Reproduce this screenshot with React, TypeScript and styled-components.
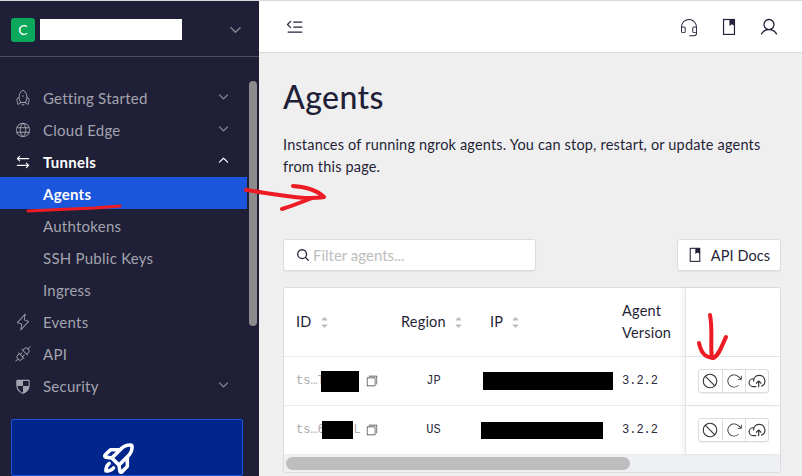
import styled, {createGlobalStyle} from 'styled-components';
import {
  PiCaretDownBold,
  PiCaretUpBold,
  PiCaretUpDownFill,
  PiRocketLight,
  PiGlobeLight,
  PiArrowsLeftRight,
  PiLightningLight,
  PiPlugsLight,
  PiShieldCheckeredFill,
  PiRocketLaunchBold,
  PiTextOutdent,
  PiHeadsetLight,
  PiUser,
  PiMagnifyingGlassBold,
  PiCopySimpleLight,
  PiProhibit,
  PiArrowClockwiseLight,
  PiCloudArrowUp,
} from 'react-icons/pi';

const GlobalStyle = createGlobalStyle`
  html, body {
    margin: 0;
    padding: 0;
    height: 476px;
    overflow: hidden;
  }
  body {
    font-family: Lato, "Liberation Sans", sans-serif;
    background: #efefef;
  }
  * {
    box-sizing: border-box;
  }
`;

const Wrapper = styled.div`
  position: relative;
  display: flex;
  width: 802px;
  height: 476px;
  overflow: hidden;
`;

const Sidebar = styled.aside`
  width: 259px;
  flex-shrink: 0;
  background: #1f1f37;
  border-top: 1px solid #d9d9d9;
  display: flex;
  flex-direction: column;
`;
const Account = styled.div`
  height: 56px;
  flex-shrink: 0;
  display: flex;
  align-items: center;
  padding: 2px 16px 0 11px;
  border-bottom: 1px solid #4c4c5e;

  > .caret {
    margin-left: auto;
    color: #8a8b97;
    font-size: 15px;
  }
`;
const Avatar = styled.div`
  width: 24px;
  height: 24px;
  border-radius: 3px;
  background: #0aa85a;
  color: white;
  display: flex;
  justify-content: center;
  align-items: center;
  font-size: 14px;
  margin-right: 5px;
`;
const Redacted = styled.div`
  width: 142px;
  height: 21px;
  background: white;
`;
const NavArea = styled.div`
  flex: 1;
  min-height: 0;
  display: flex;
  padding-top: 24px;
`;
const NavColumn = styled.div`
  width: 247px;
  flex-shrink: 0;
`;
const NavItem = styled.div<{$active?: boolean; $open?: boolean}>`
  height: 32px;
  display: flex;
  align-items: center;
  padding: 1px 17px 0 43px;
  position: relative;
  font-size: 15px;
  letter-spacing: 0.25px;
  color: ${p => (p.$active || p.$open ? '#fff' : '#a3a4ae')};
  background: ${p => (p.$active ? '#1a56db' : 'transparent')};
  font-weight: ${p => (p.$active || p.$open ? 700 : 400)};

  > .icon {
    position: absolute;
    left: 14px;
    font-size: 18px;
    color: ${p => (p.$open ? '#fff' : '#a3a4ae')};
  }

  > .caret {
    margin-left: auto;
    margin-top: -3px;
    font-size: 13px;
    color: ${p => (p.$open ? '#fff' : '#8a8b97')};
  }
`;
const NavScrollbar = styled.div`
  width: 8px;
  height: 245px;
  margin: 0 0 0 2px;
  border-radius: 4px;
  background: #8c8c8c;
`;
const Promo = styled.div`
  margin: 0 0 0 11px;
  width: 232px;
  height: 57px;
  flex-shrink: 0;
  background: #00258c;
  border: 1px solid #1a56db;
  border-radius: 2px;
  color: white;
  display: flex;
  justify-content: center;
  padding: 19px 16px 0 0;
  font-size: 38px;
  overflow: hidden;
`;

const Main = styled.main`
  flex: 1;
  min-width: 0;
  display: flex;
  flex-direction: column;
`;
const TopBar = styled.div`
  height: 53px;
  flex-shrink: 0;
  background: white;
  border-top: 1px solid #d9d9d9;
  border-bottom: 1px solid #d9d9d9;
  display: flex;
  align-items: center;
  padding: 0 23px 0 26px;
  color: #23233c;
  font-size: 20px;

  > .spacer {
    flex: 1;
  }
`;
const TopIcon = styled.span`
  display: flex;
  width: 20px;
  justify-content: center;
  margin-left: 20px;
  font-size: 20px;
`;
const Content = styled.div`
  padding: 24px 21px 0 24px;
  color: #1f1f37;
`;
const Title = styled.h1`
  margin: 0;
  font-size: 32px;
  line-height: 40px;
  font-weight: 500;
  letter-spacing: 0.4px;
`;
const Description = styled.p`
  margin: 17px 0 0;
  font-size: 14.5px;
  line-height: 22px;
  letter-spacing: 0.18px;
  width: 500px;
`;
const Controls = styled.div`
  display: flex;
  justify-content: space-between;
  margin-top: 61px;
`;
const Filter = styled.div`
  width: 253px;
  height: 32px;
  background: white;
  border: 1px solid #dcdcdc;
  border-radius: 3px;
  display: flex;
  align-items: center;
  padding: 0 12px;
  gap: 3px;
  font-size: 15px;
  color: #bdbdbd;
  box-shadow: 0 1px 1px rgba(0, 0, 0, 0.05);

  > svg {
    color: #2a2a3c;
    font-size: 14px;
  }
`;
const DocsButton = styled.div`
  width: 104px;
  height: 32px;
  background: white;
  border: 1px solid #dcdcdc;
  border-radius: 3px;
  display: flex;
  align-items: center;
  justify-content: center;
  gap: 9px;
  font-size: 14.5px;
  letter-spacing: 0.1px;
  box-shadow: 0 1px 1px rgba(0, 0, 0, 0.05);
`;
const Table = styled.div`
  margin-top: 16px;
  width: 498px;
  background: white;
  border: 1px solid #dcdcdc;
  border-radius: 3px;
`;
const Row = styled.div<{$head?: boolean}>`
  display: grid;
  grid-template-columns: 105px 89px 132px 75px 1fr;
  height: ${p => (p.$head ? '69px' : '49px')};
  border-bottom: 1px solid #ececec;
`;
const HeadCell = styled.div`
  display: flex;
  align-items: center;
  gap: 6px;
  padding-left: 12px;
  font-size: 14.5px;
  line-height: 22px;
  letter-spacing: 0.2px;

  > svg {
    color: #bcbcbc;
    font-size: 13px;
  }
`;
const Cell = styled.div<{$center?: boolean}>`
  position: relative;
  display: flex;
  align-items: center;
  justify-content: ${p => (p.$center ? 'center' : 'flex-start')};
  padding-left: ${p => (p.$center ? 0 : '12px')};
  font-family: "Liberation Mono", monospace;
  font-size: 12px;
  color: #2a2a3c;
`;
const AgentId = styled.span`
  color: #aaa;
  width: 69px;
  font-size: 12px;
  white-space: pre;
`;
const CopyIcon = styled(PiCopySimpleLight)`
  font-size: 14px;
  color: #333;
`;
const IdMask = styled.div<{$left: number; $width: number; $height: number}>`
  position: absolute;
  left: ${p => p.$left}px;
  width: ${p => p.$width}px;
  height: ${p => p.$height}px;
  background: black;
`;
const StickyCell = styled.div`
  position: relative;
  display: flex;
  align-items: center;
  justify-content: center;
  border-left: 1px solid #e4e4e4;
  box-shadow: -3px 0 4px rgba(0, 0, 0, 0.05);
`;
const ActionGroup = styled.div`
  display: flex;
  border: 1px solid #dcdcdc;
  border-radius: 3px;
  box-shadow: 0 1px 1px rgba(0, 0, 0, 0.06);
`;
const ActionButton = styled.span`
  width: 23px;
  height: 22px;
  display: flex;
  align-items: center;
  justify-content: center;
  color: #333;
  font-size: 18px;

  & + & {
    border-left: 1px solid #dcdcdc;
  }
`;
const HScrollTrack = styled.div`
  height: 17px;
  background: #eef0f4;
  padding: 2px;
`;
const HScrollThumb = styled.div`
  width: 344px;
  height: 13px;
  border-radius: 7px;
  background: #bdbdbd;
`;
const Scribble = styled.svg`
  position: absolute;
  left: 0;
  top: 0;
  pointer-events: none;
`;

const BookIcon = ({size = 16}: {size?: number}) => (
  <svg width={size} height={size * 1.12} viewBox="0 0 16 18" fill="none" stroke="currentColor" strokeWidth="1.2">
    <rect x="2.5" y="1.5" width="11" height="15"/>
    <path d="M9 1.5V7L11 5.6L13 7V1.5" fill="currentColor"/>
  </svg>
);

const SortIcon = () => <PiCaretUpDownFill/>;

const App = () => {
  return (
    <Wrapper>
      <GlobalStyle/>
      <Sidebar>
        <Account>
          <Avatar>C</Avatar>
          <Redacted/>
          <PiCaretDownBold className="caret"/>
        </Account>
        <NavArea>
          <NavColumn>
            <NavItem><PiRocketLight className="icon"/>Getting Started<PiCaretDownBold className="caret"/></NavItem>
            <NavItem><PiGlobeLight className="icon"/>Cloud Edge<PiCaretDownBold className="caret"/></NavItem>
            <NavItem $open><PiArrowsLeftRight className="icon"/>Tunnels<PiCaretUpBold className="caret"/></NavItem>
            <NavItem $active>Agents</NavItem>
            <NavItem>Authtokens</NavItem>
            <NavItem>SSH Public Keys</NavItem>
            <NavItem>Ingress</NavItem>
            <NavItem><PiLightningLight className="icon"/>Events</NavItem>
            <NavItem><PiPlugsLight className="icon"/>API</NavItem>
            <NavItem><PiShieldCheckeredFill className="icon"/>Security<PiCaretDownBold className="caret"/></NavItem>
          </NavColumn>
          <NavScrollbar/>
        </NavArea>
        <Promo><PiRocketLaunchBold/></Promo>
      </Sidebar>
      <Main>
        <TopBar>
          <PiTextOutdent/>
          <div className="spacer"/>
          <TopIcon><PiHeadsetLight/></TopIcon>
          <TopIcon><BookIcon/></TopIcon>
          <TopIcon><PiUser/></TopIcon>
        </TopBar>
        <Content>
          <Title>Agents</Title>
          <Description>
            Instances of running ngrok agents. You can stop, restart, or update agents from this page.
          </Description>
          <Controls>
            <Filter><PiMagnifyingGlassBold/>Filter agents...</Filter>
            <DocsButton><BookIcon size={14}/>API Docs</DocsButton>
          </Controls>
          <Table>
            <Row $head>
              <HeadCell>ID <SortIcon/></HeadCell>
              <HeadCell>Region <SortIcon/></HeadCell>
              <HeadCell>IP <SortIcon/></HeadCell>
              <HeadCell>Agent Version</HeadCell>
              <StickyCell/>
            </Row>
            <Row>
              <Cell>
                <AgentId>ts…T</AgentId>
                <CopyIcon/>
                <IdMask $left={37} $width={38} $height={21}/>
              </Cell>
              <Cell $center>JP</Cell>
              <Cell><IdMask $left={5} $width={130} $height={18}/></Cell>
              <Cell>3.2.2</Cell>
              <StickyCell>
                <ActionGroup>
                  <ActionButton><PiProhibit/></ActionButton>
                  <ActionButton><PiArrowClockwiseLight/></ActionButton>
                  <ActionButton><PiCloudArrowUp/></ActionButton>
                </ActionGroup>
              </StickyCell>
            </Row>
            <Row>
              <Cell>
                <AgentId>ts…6    L</AgentId>
                <CopyIcon/>
                <IdMask $left={38} $width={31} $height={18}/>
              </Cell>
              <Cell $center>US</Cell>
              <Cell><IdMask $left={3} $width={122} $height={17}/></Cell>
              <Cell>3.2.2</Cell>
              <StickyCell>
                <ActionGroup>
                  <ActionButton><PiProhibit/></ActionButton>
                  <ActionButton><PiArrowClockwiseLight/></ActionButton>
                  <ActionButton><PiCloudArrowUp/></ActionButton>
                </ActionGroup>
              </StickyCell>
            </Row>
            <HScrollTrack><HScrollThumb/></HScrollTrack>
          </Table>
        </Content>
      </Main>
      {/* red marker notes drawn over the screenshot */}
      <Scribble width="802" height="476" fill="none" stroke="#ed1c24" strokeWidth="4" strokeLinecap="round" strokeLinejoin="round">
        <path d="M28 211C55 210 70 209 95 208L120 206" strokeWidth="3"/>
        <path d="M246 190C262 192 280 196 305 198C312 198 318 198 324 197C318 191 308 187 293 186M282 209C292 206 302 202 312 198"/>
        <path d="M710 315C713 330 710 345 712 358M699 343C701 352 704 357 713 358C719 356 722 345 726 337"/>
      </Scribble>
    </Wrapper>
  );
};

export default App;
